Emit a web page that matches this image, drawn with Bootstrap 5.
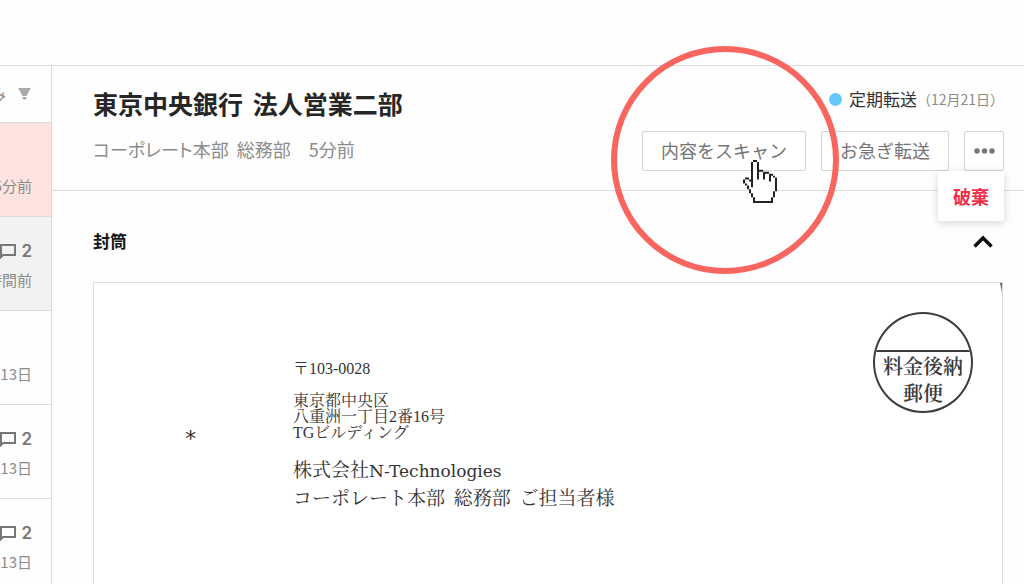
<!DOCTYPE html>
<html lang="ja">
<head>
<meta charset="utf-8">
<meta name="viewport" content="width=device-width, initial-scale=1">
<title>東京中央銀行 法人営業二部</title>
<link href="https://cdn.jsdelivr.net/npm/bootstrap@5.3.0/dist/css/bootstrap.min.css" rel="stylesheet">
<style>
  :root { --line: #dcdcdc; --muted-text: #8c8c8c; --ink: #2b2b2b; }
  body { font-family: "Noto Sans CJK JP", sans-serif; background: #fefefe; color: var(--ink); }
  a { color: inherit; text-decoration: none; }
  .topbar { height: 66px; border-bottom: 1px solid var(--line); flex: none; }
  .mail-list { width: 52px; border-right: 1px solid var(--line); flex: none; }
  .filter-bar { height: 57px; padding: 0 20px 0 0; gap: 12px; border: 0; border-bottom: 1px solid var(--line); background: none; color: var(--muted-text); font-size: 15px; }
  .filter-bar > * { flex: none; }
  .mail-item { height: 94px; padding: 20px 19px 16px 0; border-bottom: 1px solid var(--line); color: var(--muted-text); font-size: 15px; line-height: 28px; }
  .mail-item.unread { background: #ffe3e1; }
  .mail-item.current { background: #f2f2f2; }
  .comments { font-size: 17px; color: #777; gap: 5px; }
  .comments b { font-family: Inter, sans-serif; font-weight: 600; }
  .mail-head { min-height: 125px; padding: 19px 20px 0 41px; border-bottom: 1px solid var(--line); }
  .mail-title { font-size: 25px; line-height: 36px; font-weight: 700; margin: 0 0 14px; color: #262626; }
  .mail-sub { font-size: 18px; line-height: 28px; color: var(--muted-text); font-feature-settings: "palt"; }
  .status-row { font-size: 17px; line-height: 24px; padding-top: 2px; margin-bottom: 20px; color: #333; }
  .status-dot { width: 13px; height: 13px; background: #64c7fc; margin-right: 7px; }
  .status-date { font-size: 14px; color: var(--muted-text); }
  .actions { gap: 15px; }
  .btn-act { height: 40px; padding: 0 18px 2px; border: 1px solid #d4d4d4; border-radius: 2px; background: #fff; color: #757575; font-size: 18px; line-height: 36px; }
  .btn-more { width: 40px; padding: 0; }
  .ring { left: 50%; top: 50%; width: 228px; height: 228px; margin: -105px 0 0 -113px; border: 6px solid #f9655f; z-index: 5; pointer-events: none; }
  .pointer { left: 101px; top: 29px; z-index: 6; pointer-events: none; }
  .more-menu { right: 0; top: 40px; width: 66px; height: 50px; background: #fff; border-radius: 2px; box-shadow: 0 2px 8px rgba(0,0,0,.16); z-index: 4; }
  .more-menu button { color: #ee2f49; font-size: 18px; line-height: 24px; font-weight: 700; }
  .mail-body { padding: 36px 21px 0 41px; }
  .section-title { font-size: 17px; line-height: 28px; font-weight: 700; margin: 0; color: #151515; }
  .section-head { margin-bottom: 27px; }
  .fold { width: 40px; height: 28px; }
  .envelope { min-height: 400px; padding: 29px 29px 0 90px; border: 1px solid var(--line); background: #fff; }
  .envelope::after { content: ""; position: absolute; right: 0; top: 0; width: 2px; height: 12px; background: linear-gradient(#555, #ddd); clip-path: polygon(0 0, 100% 0, 100% 100%); }
  .sheet-mark { width: 109px; padding-top: 113px; font: 22px/28px "DejaVu Sans Mono", monospace; color: #333; }
  .address { padding-top: 49px; font: 16px/16px "Liberation Serif", "Noto Serif CJK JP", "Noto Sans CJK JP", serif; color: #333; }
  .address p { margin-bottom: 16px; }
  .address .to { font-size: 19px; line-height: 27px; }
  .address .latin { font-family: "DejaVu Serif", serif; font-size: 17px; }
  .address .to span + span { margin-left: 4px; }
  .stamp { width: 100px; height: 101px; border: 2px solid #3c3c3c; font: 600 20px/27px "Noto Serif CJK JP", "Noto Sans CJK JP", serif; color: #3a3a3a; }
  .stamp-top { height: 38px; border-bottom: 2px solid #3c3c3c; }
</style>
</head>
<body>
<div class="d-flex flex-column vh-100 overflow-hidden">
  <header class="topbar"></header>
  <div class="d-flex flex-grow-1">
    <nav class="mail-list overflow-hidden text-nowrap" aria-label="郵便物">
      <button type="button" class="filter-bar d-flex w-100 align-items-center justify-content-end">
        <span>み</span>
        <svg width="13" height="12" viewBox="0 0 13 12" fill="#aaa"><path d="M0 0h13l-3 5H3zM3 5h7l-1.500 3h-4zM4.500 9h4v1.500l-1 1h-2l-1-1z"/></svg>
      </button>
      <a href="#" class="mail-item unread d-flex flex-column align-items-end justify-content-end"><span>5分前</span></a>
      <a href="#" class="mail-item current d-flex flex-column align-items-end justify-content-between">
        <span class="comments d-flex align-items-center"><svg width="17" height="16" viewBox="0 0 17 16" fill="none" stroke="#777" stroke-width="2"><path d="M2 14V2h14v10H4z"/></svg><b>2</b></span>
        <span>時間前</span>
      </a>
      <a href="#" class="mail-item d-flex flex-column align-items-end justify-content-end"><span>13日</span></a>
      <a href="#" class="mail-item d-flex flex-column align-items-end justify-content-between">
        <span class="comments d-flex align-items-center"><svg width="17" height="16" viewBox="0 0 17 16" fill="none" stroke="#777" stroke-width="2"><path d="M2 14V2h14v10H4z"/></svg><b>2</b></span>
        <span>13日</span>
      </a>
      <a href="#" class="mail-item d-flex flex-column align-items-end justify-content-between">
        <span class="comments d-flex align-items-center"><svg width="17" height="16" viewBox="0 0 17 16" fill="none" stroke="#777" stroke-width="2"><path d="M2 14V2h14v10H4z"/></svg><b>2</b></span>
        <span>13日</span>
      </a>
    </nav>

    <main class="flex-grow-1">
      <div class="mail-head d-flex justify-content-between">
        <div>
          <h1 class="mail-title">東京中央銀行 <span class="ms-1">法人営業二部</span></h1>
          <div class="mail-sub">コーポレート本部 <span class="ms-1">総務部　5分前</span></div>
        </div>
        <div>
          <div class="status-row d-flex align-items-center justify-content-end">
            <span class="status-dot rounded-circle"></span>
            <span>定期転送</span>
            <span class="status-date">（12月21日）</span>
          </div>
          <div class="actions d-flex">
            <div class="position-relative">
              <button type="button" class="btn btn-act">内容をスキャン</button>
              <span class="ring position-absolute rounded-circle"></span>
              <svg class="pointer position-absolute" width="34" height="43" viewBox="0 0 17 22" preserveAspectRatio="none">
                <path fill="#fff" d="M5 1h2v5h3l3 1 3 2v7l-2 5H6l-2-4-3-5v-2h3V1z"/>
                <path fill="#222" d="M5 0h2v1H5zM4 1h1v13H4zM7 1h1v9H7zM8 5h2v1H8zM10 6h1v4h-1zM11 6h2v1h-2zM13 7h1v4h-1zM14 7h1v1h-1zM15 8h1v1h-1zM16 9h1v7h-1zM1 9h2v1H1zM0 10h1v2H0zM3 10h1v1H3zM1 12h1v1H1zM2 13h1v2H2zM3 15h1v2H3zM4 17h1v2H4zM5 19h1v3H5zM6 21h8v1H6zM14 19h1v3h-1zM15 16h1v3h-1z"/>
              </svg>
            </div>
            <button type="button" class="btn btn-act">お急ぎ転送</button>
            <div class="position-relative">
              <button type="button" class="btn btn-act btn-more d-flex align-items-center justify-content-center" aria-label="その他" aria-expanded="true">
                <svg width="21" height="6" viewBox="0 0 21 6" fill="#777"><circle cx="3" cy="3" r="2.700"/><circle cx="10.500" cy="3" r="2.700"/><circle cx="18" cy="3" r="2.700"/></svg>
              </button>
              <div class="more-menu position-absolute d-flex align-items-center justify-content-center">
                <button type="button" class="btn border-0 p-0">破棄</button>
              </div>
            </div>
          </div>
        </div>
      </div>

      <section class="mail-body">
        <div class="section-head d-flex justify-content-between">
          <h2 class="section-title">封筒</h2>
          <button type="button" class="fold btn border-0 p-0 d-flex align-items-center justify-content-center" aria-label="閉じる">
            <svg width="20" height="13" viewBox="0 0 20 13" fill="none" stroke="#0c0c0c" stroke-width="3.500"><path d="M1.500 11.500 10 3l8.500 8.500"/></svg>
          </button>
        </div>
        <div class="envelope position-relative d-flex align-items-start">
          <div class="sheet-mark">*</div>
          <address class="address flex-grow-1">
            <p>〒103-0028</p>
            <p>東京都中央区<br>八重洲一丁目2番16号<br>TGビルディング</p>
            <div class="to">株式会社<span class="latin">N-Technologies</span></div>
            <div class="to"><span>コーポレート本部</span><span> 総務部</span><span> ご担当者様</span></div>
          </address>
          <div class="stamp rounded-circle overflow-hidden text-center">
            <div class="stamp-top"></div>
            料金後納<br>郵便
          </div>
        </div>
      </section>
    </main>
  </div>
</div>
<script src="https://cdn.jsdelivr.net/npm/bootstrap@5.3.0/dist/js/bootstrap.bundle.min.js"></script>
</body>
</html>
